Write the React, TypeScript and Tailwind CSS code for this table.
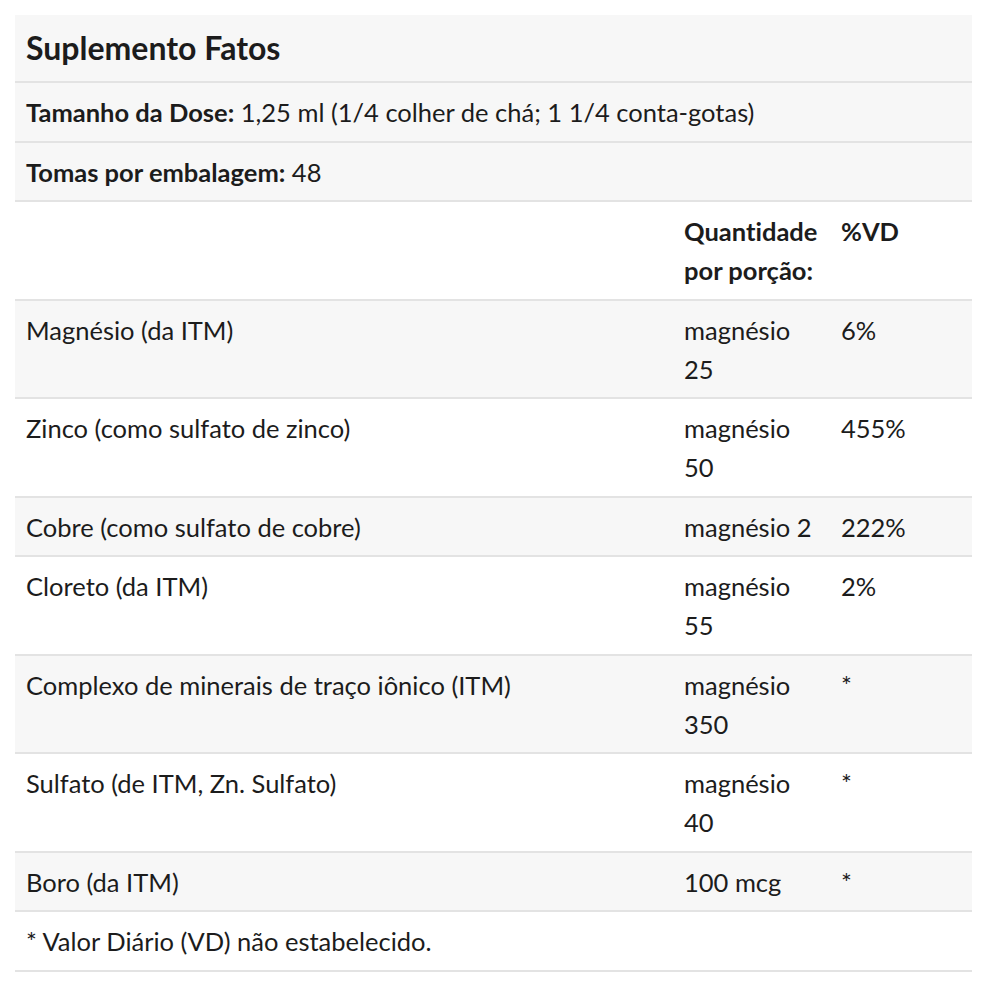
import React from 'react';

const rows = [
  { name: 'Magnésio (da ITM)', amount: 'magnésio 25', dv: '6%' },
  { name: 'Zinco (como sulfato de zinco)', amount: 'magnésio 50', dv: '455%' },
  { name: 'Cobre (como sulfato de cobre)', amount: 'magnésio 2', dv: '222%' },
  { name: 'Cloreto (da ITM)', amount: 'magnésio 55', dv: '2%' },
  { name: 'Complexo de minerais de traço iônico (ITM)', amount: 'magnésio 350', dv: '*' },
  { name: 'Sulfato (de ITM, Zn. Sulfato)', amount: 'magnésio 40', dv: '*' },
  { name: 'Boro (da ITM)', amount: '100 mcg', dv: '*' },
];

const cell = 'px-[11px] pt-[10px] pb-[8.5px]';

const App: React.FC = () => {
  return (
    <div className="min-h-screen bg-white pt-[15px] pl-[15px] pr-[28px] text-[#1c1c1c] font-['Lato','Liberation_Sans',sans-serif] text-[25.5px] leading-[39px] [font-variant-ligatures:none]">
      <table className="w-full border-collapse table-fixed">
        <colgroup>
          <col />
          <col className="w-[157px]" />
          <col className="w-[142px]" />
        </colgroup>
        <tbody>
          <tr className="bg-[#f7f7f7] border-b-2 border-[#e3e3e3]">
            <td colSpan={3} className="px-[11px] pt-[10px] pb-[10px] text-[32px] leading-[46px] font-bold">
              Suplemento Fatos
            </td>
          </tr>
          <tr className="bg-[#f7f7f7] border-b-2 border-[#e3e3e3]">
            <td colSpan={3} className={cell}>
              <b>Tamanho da Dose:</b> 1,25 ml (1/4 colher de chá; 1 1/4 conta-gotas)
            </td>
          </tr>
          <tr className="bg-[#f7f7f7] border-b-2 border-[#e3e3e3]">
            <td colSpan={3} className={cell}>
              <b>Tomas por embalagem:</b> 48
            </td>
          </tr>
          <tr className="bg-white border-b-2 border-[#e3e3e3] font-bold align-top">
            <td className={cell}></td>
            <td className={cell}>Quantidade por porção:</td>
            <td className={cell}>%VD</td>
          </tr>
          {rows.map((r, i) => (
            <tr
              key={i}
              className={`${i % 2 === 0 ? 'bg-[#f7f7f7]' : 'bg-white'} border-b-2 border-[#e3e3e3] align-top`}
            >
              <td className={cell}>{r.name}</td>
              <td className={cell}>{r.amount}</td>
              <td className={cell}>{r.dv}</td>
            </tr>
          ))}
          <tr className="bg-white border-b-2 border-[#e3e3e3]">
            <td colSpan={3} className={cell}>
              * Valor Diário (VD) não estabelecido.
            </td>
          </tr>
        </tbody>
      </table>
    </div>
  );
};

export default App;
